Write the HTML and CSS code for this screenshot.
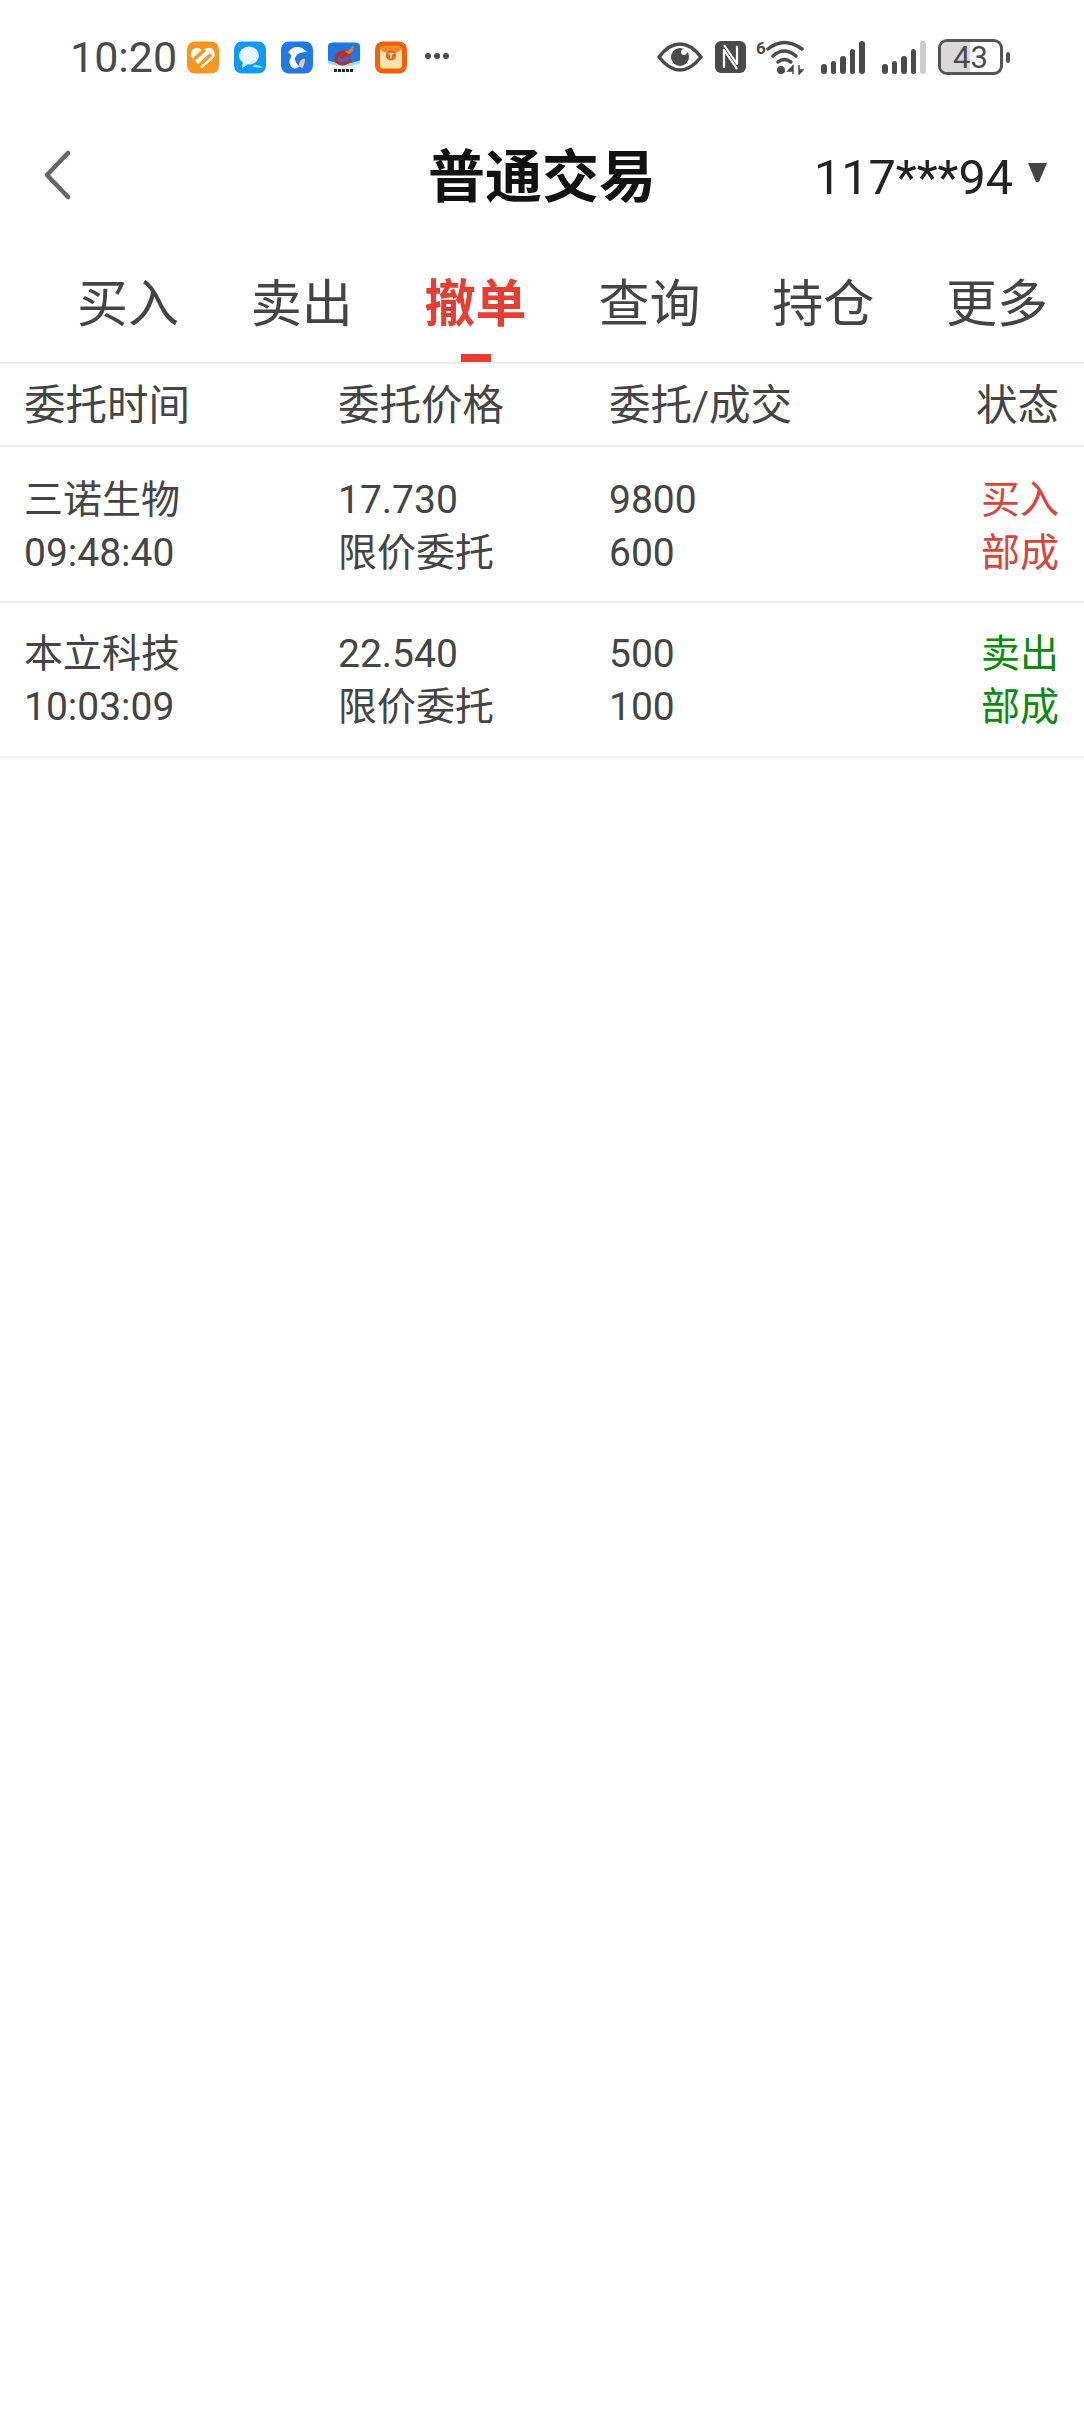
FILE: index.html
```html
<!DOCTYPE html>
<html lang="zh-CN">
  <head>
    <meta charset="UTF-8" />
    <meta name="viewport" content="width=device-width, initial-scale=1.0" />
    <title>普通交易</title>
    <link rel="stylesheet" href="styles.css">
  </head>
  <body>
    <div class="status-bar">
      <div class="status-left">
        <span class="clock">10:20</span>
        <div class="app-icons">
          <svg class="app-icon" viewBox="0 0 32 32">
            <rect width="32" height="32" rx="8" fill="#f7961f" />
            <path d="M15 27 L5 16 Q2 10 7 7 Q12 5 15 9 Q20 5 25 7 Q29 11 27 16 Z" fill="#fff" />
            <path d="M7 18 L18 8 M12 24 L24 13" stroke="#f7961f" stroke-width="3.5" />
          </svg>
          <svg class="app-icon" viewBox="0 0 32 32">
            <rect width="32" height="32" rx="8" fill="#0f9bf5" />
            <ellipse cx="15" cy="14" rx="10" ry="9" fill="#e8f6ff" />
            <path d="M9 20 L8 27 L15 22 Z" fill="#e8f6ff" />
            <path d="M21 23 Q26 24 29 26 Q24 27 18 25 Z" fill="#9fdcff" />
          </svg>
          <svg class="app-icon" viewBox="0 0 32 32">
            <rect width="32" height="32" rx="8" fill="#2179e6" />
            <path d="M7 11 Q12 4 20 6 L26 10 L21 11 Q15 12 14 17 Q14 22 19 25 Q13 29 10 25 Q7 20 10 16 Q11 13 7 11 Z" fill="#fff" />
            <path d="M18 24 Q18 18 24 17 Q24 23 21 27 Z" fill="#e9c9a0" />
          </svg>
          <svg class="app-icon" viewBox="0 0 32 32">
            <path d="M0 5 Q0 1 5 1 L27 1 Q32 1 32 5 L32 21 Q16 27 0 21 Z" fill="#1f78e0" />
            <path d="M0 19 Q16 25 32 19 L32 22 Q16 28 0 22 Z" fill="#a6dcf7" />
            <path d="M23 13 Q15 8 10 13 Q5 20 13 22 Q19 23 23 18 M22 14 Q15 13 13 17" fill="none" stroke="#c8281e" stroke-width="3.5" />
            <path d="M17 10 Q23 9 25 3 Q28 9 21 13 Z" fill="#e07a30" />
            <path d="M6 29 H26" stroke="#223" stroke-width="3" stroke-dasharray="3 1" />
          </svg>
          <svg class="app-icon" viewBox="0 0 32 32">
            <rect width="32" height="32" rx="8" fill="#f2600c" />
            <rect x="5" y="5" width="22" height="22" rx="3" fill="#fde2b0" />
            <path d="M5 8 Q5 5 8 5 L24 5 Q27 5 27 8 Q16 16 5 8 Z" fill="#f58a1f" />
            <circle cx="16" cy="14" r="5" fill="#f2600c" />
            <path d="M13.5 12 H18.5 M16 12 V17" stroke="#fff" stroke-width="1.5" />
          </svg>
        </div>
        <div class="more-dots"><i></i><i></i><i></i></div>
      </div>
      <div class="status-right">
        <svg class="eye" viewBox="0 0 46 32">
          <path d="M2 16 Q12 3 23 3 Q34 3 44 16 Q34 29 23 29 Q12 29 2 16 Z" fill="none" stroke="#4a4a4a" stroke-width="3.5" stroke-linejoin="round" />
          <circle cx="23" cy="16" r="9" fill="#4a4a4a" />
          <circle cx="27" cy="11" r="3" fill="#fff" />
        </svg>
        <svg class="nfc" viewBox="0 0 31 32">
          <rect width="31" height="32" rx="6" fill="#4a4a4a" />
          <path d="M9 8 V27 M22 5 V24 M9 4 L22 23 M9 9 L22 28" stroke="#fff" stroke-width="2.2" fill="none" />
        </svg>
        <div class="wifi">
          <span class="wifi-six">6</span>
          <svg viewBox="0 0 38 36" width="38" height="36">
            <path d="M2 10 Q18 -3 36 10" stroke="#4a4a4a" stroke-width="3.5" fill="none" stroke-linecap="round" />
            <path d="M7 17 Q18 7 30 17" stroke="#4a4a4a" stroke-width="3.5" fill="none" stroke-linecap="round" />
            <path d="M12 23 Q18 18 25 23" stroke="#4a4a4a" stroke-width="3.5" fill="none" stroke-linecap="round" />
            <circle cx="15" cy="31" r="4" fill="#4a4a4a" />
            <path d="M27 26 V35 M22 32 H27 V27 Z M33 26 V35 L37 31 H33 Z" stroke="#4a4a4a" stroke-width="1.5" fill="#4a4a4a" />
          </svg>
        </div>
        <div class="signal">
          <i class="h1"></i><i class="h2"></i><i class="h3"></i><i class="h4"></i><i class="h5"></i>
        </div>
        <div class="signal">
          <i class="h1"></i><i class="h2"></i><i class="h3"></i><i class="h4"></i><i class="h5 off"></i>
        </div>
        <div class="battery">
          <div class="battery-body">
            <div class="battery-fill"></div>
            <span class="battery-num">43</span>
          </div>
          <div class="battery-nub"></div>
        </div>
      </div>
    </div>

    <div class="nav-bar">
      <div class="nav-left">
        <svg class="back" viewBox="0 0 28 50">
          <path d="M25 3 L4 25 L25 47" fill="none" stroke="#666" stroke-width="4.5" stroke-linecap="round" stroke-linejoin="round" />
        </svg>
      </div>
      <div class="nav-title">普通交易</div>
      <div class="account">
        <span>117***94</span>
        <svg class="account-arrow" viewBox="0 0 21 21">
          <path d="M1 1 H20 L12 20 H9 Z" fill="#444" />
        </svg>
      </div>
    </div>

    <div class="tabs">
      <div class="tab">买入</div>
      <div class="tab">卖出</div>
      <div class="tab active">撤单</div>
      <div class="tab">查询</div>
      <div class="tab">持仓</div>
      <div class="tab">更多</div>
    </div>

    <div class="row table-head">
      <div>委托时间</div>
      <div>委托价格</div>
      <div>委托/成交</div>
      <div class="right">状态</div>
    </div>

    <div class="row order">
      <div>三诺生物<br />09:48:40</div>
      <div>17.730<br />限价委托</div>
      <div>9800<br />600</div>
      <div class="right buy">买入<br />部成</div>
    </div>
    <div class="row order last">
      <div>本立科技<br />10:03:09</div>
      <div>22.540<br />限价委托</div>
      <div>500<br />100</div>
      <div class="right sell">卖出<br />部成</div>
    </div>
  </body>
</html>
```

FILE: styles.css
```css
* {
  box-sizing: border-box;
  margin: 0;
  padding: 0;
}
body {
  background-color: #fff;
  width: 1084px;
  min-height: 2412px;
  color: #444;
  font-family: Roboto, 'Noto Sans CJK SC', sans-serif;
  overflow-x: hidden;
}

/* status bar */
.status-bar {
  display: flex;
  justify-content: space-between;
  align-items: center;
  height: 114px;
  padding: 0 74px 0 70px;
}
.status-left {
  display: flex;
  align-items: center;
}
.clock {
  font-size: 43px;
  color: #4a4a4a;
  width: 117px;
}
.app-icons {
  display: flex;
  gap: 15px;
}
.app-icon {
  width: 32px;
  height: 33px;
}
.more-dots {
  display: flex;
  gap: 3px;
  margin-left: 18px;
  margin-top: -2px;
}
.more-dots i {
  width: 6px;
  height: 6px;
  border-radius: 50%;
  background-color: #4a4a4a;
}
.status-right {
  display: flex;
  align-items: center;
}
.eye {
  width: 46px;
  height: 32px;
}
.nfc {
  width: 31px;
  height: 32px;
  margin-left: 12px;
}
.wifi {
  display: flex;
  margin-left: 10px;
  width: 48px;
}
.wifi-six {
  font-size: 17px;
  font-weight: 700;
  line-height: 18px;
  width: 10px;
  color: #4a4a4a;
}
.signal {
  display: flex;
  align-items: flex-end;
  gap: 4px;
  height: 34px;
  width: 44px;
  margin-left: 17px;
}
.signal i {
  width: 5.5px;
  border-radius: 3px;
  background-color: #4a4a4a;
}
.signal .h1 { height: 10px; }
.signal .h2 { height: 13px; }
.signal .h3 { height: 18px; }
.signal .h4 { height: 25px; }
.signal .h5 { height: 33px; }
.signal .off { background-color: #ccc; }
.battery {
  display: flex;
  align-items: center;
  margin-left: 12px;
}
.battery-body {
  position: relative;
  display: flex;
  justify-content: center;
  align-items: center;
  width: 65px;
  height: 36px;
  border: 3px solid #555;
  border-radius: 9px;
  overflow: hidden;
}
.battery-fill {
  position: absolute;
  left: 0;
  top: 0;
  bottom: 0;
  width: 49%;
  background-color: #d9d9d9;
}
.battery-num {
  position: relative;
  font-size: 31px;
  color: #4a4a4a;
}
.battery-nub {
  width: 4px;
  height: 11px;
  margin-left: 3px;
  border-radius: 2px;
  background-color: #555;
}

/* nav bar */
.nav-bar {
  display: grid;
  grid-template-columns: 1fr auto 1fr;
  align-items: center;
  height: 122px;
  padding: 0 36px;
}
.back {
  display: block;
  width: 28px;
  height: 50px;
  margin-left: 7px;
}
.nav-title {
  padding-top: 5px;
  font-size: 57px;
  font-weight: 700;
  color: #111;
  line-height: 1;
}
.account {
  display: flex;
  justify-content: flex-end;
  align-items: center;
  gap: 14px;
  padding-top: 5px;
  font-size: 48.5px;
  color: #222;
}
.account-arrow {
  width: 21px;
  height: 21px;
  margin-top: -10px;
}

/* tabs */
.tabs {
  display: flex;
  height: 128px;
  padding-left: 41px;
  border-bottom: 2px solid #eee;
}
.tab {
  position: relative;
  flex: 1;
  padding-top: 39px;
  text-align: center;
  font-size: 51px;
  line-height: 60px;
  color: #444;
}
.tab.active {
  font-weight: 700;
  color: #e53f33;
}
.tab.active::after {
  content: '';
  position: absolute;
  left: 50%;
  bottom: 0;
  width: 30px;
  height: 8px;
  margin-left: -15px;
  background-color: #e53f33;
}

/* table */
.row {
  display: grid;
  grid-template-columns: 314px 271px 1fr auto;
  align-items: center;
  padding: 0 25px 0 24px;
  border-bottom: 2px solid #eee;
}
.table-head {
  height: 83px;
  padding-bottom: 5px;
  font-size: 41.5px;
}
.order {
  height: 156px;
  padding-top: 5px;
  font-size: 39px;
  line-height: 53px;
}
.order.last {
  height: 155px;
  padding-top: 3px;
  border-bottom-color: #f3f3f3;
}
.right {
  text-align: right;
}
.buy {
  color: #d9433a;
}
.sell {
  color: #0a8a0a;
}
```
